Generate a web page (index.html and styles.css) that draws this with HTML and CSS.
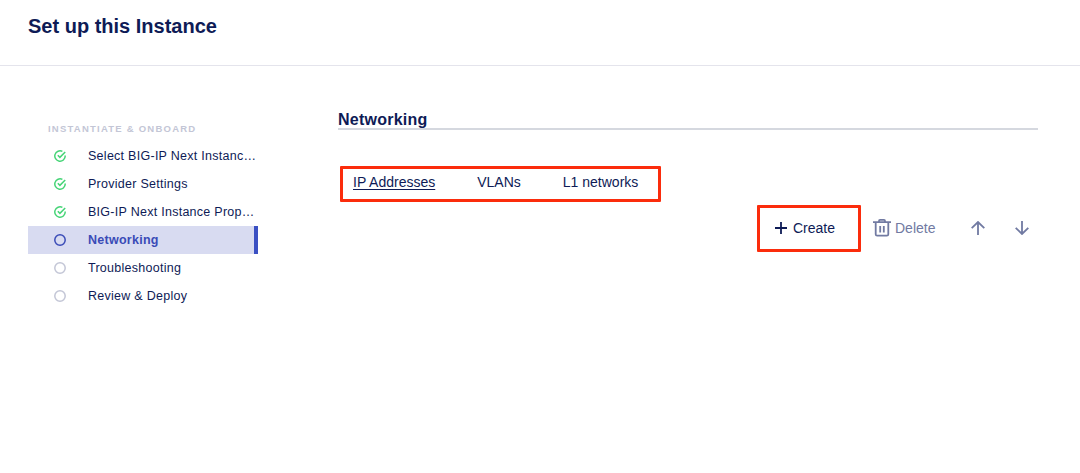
FILE: index.html
```html
<!DOCTYPE html>
<html lang="en">
<head>
<meta charset="utf-8">
<title>Set up this Instance</title>
<link rel="stylesheet" href="styles.css">
</head>
<body>
<svg class="defs" width="0" height="0">
  <symbol id="done" viewBox="0 0 12 12"><path d="M11.2 5.4V6a5.2 5.2 0 1 1-2.8-4.6M3.8 5.3l2.1 2.1L11.2 2"/></symbol>
  <symbol id="open" viewBox="0 0 12 12"><circle cx="6" cy="6" r="5.2"/></symbol>
</svg>
<header class="header"><h1 class="title">Set up this Instance</h1></header>
<main class="body">
  <nav class="steps">
    <h2 class="steps-title">INSTANTIATE &amp; ONBOARD</h2>
    <ul class="list">
      <li class="step done"><svg class="mark"><use href="#done"/></svg><span>Select BIG-IP Next Instanc…</span></li>
      <li class="step done"><svg class="mark"><use href="#done"/></svg><span>Provider Settings</span></li>
      <li class="step done"><svg class="mark"><use href="#done"/></svg><span>BIG-IP Next Instance Prop…</span></li>
      <li class="step current"><svg class="mark"><use href="#open"/></svg><span>Networking</span></li>
      <li class="step"><svg class="mark"><use href="#open"/></svg><span>Troubleshooting</span></li>
      <li class="step"><svg class="mark"><use href="#open"/></svg><span>Review &amp; Deploy</span></li>
    </ul>
  </nav>
  <section class="content">
    <h2 class="section-title">Networking</h2>
    <div class="tabs">
      <a class="tab active">IP Addresses</a>
      <a class="tab">VLANs</a>
      <a class="tab">L1 networks</a>
    </div>
    <div class="toolbar">
      <button class="btn create"><svg class="plus" viewBox="0 0 12 12"><path d="M6 0v12M0 6h12"/></svg>Create</button>
      <button class="btn muted"><svg class="trash" viewBox="0 0 18 18"><path d="M0 3.2h18M6 3V1.9q0-1 1-1h4q1 0 1 1V3M2.7 3.2v12q0 1.5 1.5 1.5h9.6q1.5 0 1.5-1.5v-12M7.2 7v6.5M10.8 7v6.5"/></svg>Delete</button>
      <button class="btn muted arrow up"><svg viewBox="0 0 14 14"><path d="M7 14V1M.7 7.2 7 1l6.3 6.2"/></svg></button>
      <button class="btn muted arrow down"><svg viewBox="0 0 14 14"><path d="M7 0v13M.7 6.8 7 13l6.3-6.2"/></svg></button>
    </div>
  </section>
</main>
</body>
</html>
```

FILE: styles.css
```css
* { box-sizing: border-box; }
body { margin: 0; background: #fff; color: #0e1b56; font-family: "Liberation Sans", Arial, sans-serif; }
h1, h2, ul { margin: 0; padding: 0; }
svg { fill: none; stroke: currentColor; flex: none; }
.defs { position: absolute; }
.header { height: 66px; padding: 14px 28px 0; border-bottom: 1px solid #e4e4ec; }
.title { font-size: 20px; line-height: 24px; }
.body { display: flex; gap: 80px; padding: 0 42px 0 28px; }
.steps { width: 230px; padding-top: 56px; }
.steps-title { padding-left: 20px; font-size: 9.5px; line-height: 14px; letter-spacing: 1.23px; color: #c3c6d6; white-space: nowrap; }
.list { margin-top: 6px; list-style: none; }
.step { display: flex; align-items: center; gap: 22px; height: 28px; padding-left: 26px; font-size: 12.5px; letter-spacing: .27px; white-space: nowrap; }
.mark { width: 12px; height: 12px; stroke-width: 1.5; color: #c3c6d6; }
.done .mark { color: #45d476; }
.current { background: #d8dbf1; border-right: 4px solid #3b50c3; color: #3a4bb7; font-weight: bold; }
.current .mark { color: #3a4bb7; }
.content { flex: 1; padding-top: 44px; }
.section-title { height: 20px; border-bottom: 2px solid #d5d8df; font-size: 16px; line-height: 20px; letter-spacing: .24px; }
.tabs { display: flex; gap: 42px; width: 321px; height: 36px; margin: 36px 0 0 2px; padding: 4px 0 0 10px; border: 3px solid #fb2c0c; border-radius: 1px; font-size: 14px; line-height: 18px; white-space: nowrap; }
.active { text-decoration: underline; text-underline-offset: 2px; }
.toolbar { display: flex; align-items: center; height: 47px; margin: 3px 0 0 419px; }
.btn { display: flex; align-items: center; height: 100%; padding: 0; border: 0; background: none; color: inherit; font: 14px "Liberation Sans", Arial, sans-serif; }
.create { width: 104px; padding: 0 0 2px 15px; gap: 6px; border: 3px solid #fb2c0c; border-radius: 1px; }
.plus { width: 12px; height: 12px; stroke-width: 1.8; }
.muted { color: #717aa2; padding-bottom: 1px; }
.create + .btn { margin-left: 12px; gap: 4px; }
.trash { width: 18px; height: 18px; stroke-width: 1.8; }
.arrow svg { width: 14px; height: 14px; stroke-width: 1.8; }
.up { margin-left: 36px; }
.down { margin-left: 30px; }
```
